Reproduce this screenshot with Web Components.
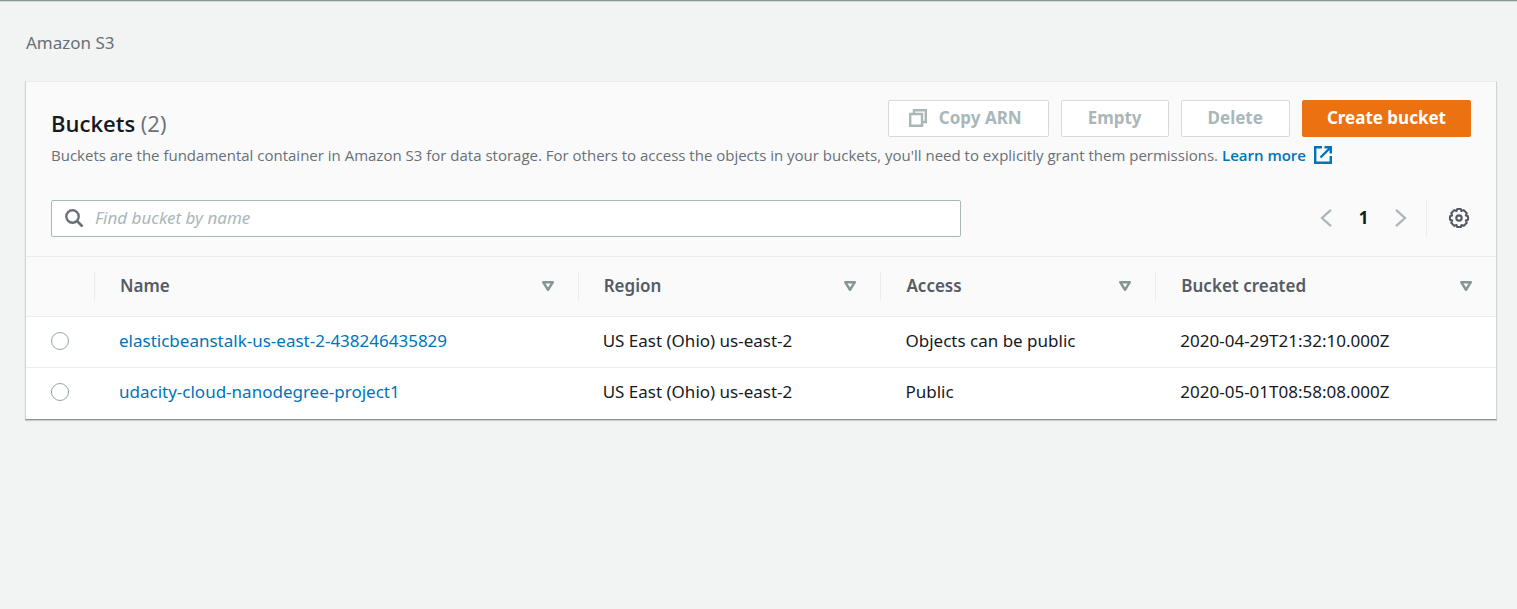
<!DOCTYPE html>
<html lang="en">
<head>
<meta charset="utf-8">
<meta name="viewport" content="width=device-width, initial-scale=1">
<title>Amazon S3</title>
<style>
  :root {
    --text: #16191f;
    --muted: #687078;
    --heading: #545b64;
    --disabled: #aab7b8;
    --line: #eaeded;
    --link: #0073bb;
    --accent: #ec7211;
  }
  body {
    margin: 0;
    background: #f2f3f3;
    color: var(--text);
    font: 17px/24px "Noto Sans", "Open Sans", sans-serif;
  }
</style>
</head>
<body>
<s3-page>
  <s3-breadcrumb slot="breadcrumb">Amazon S3</s3-breadcrumb>
  <s3-panel>
    <s3-heading slot="header" count="2">
      Buckets
      <s3-button slot="actions" icon="copy" disabled>Copy ARN</s3-button>
      <s3-button slot="actions" disabled>Empty</s3-button>
      <s3-button slot="actions" disabled>Delete</s3-button>
      <s3-button slot="actions" primary>Create bucket</s3-button>
      <span slot="description">Buckets are the fundamental container in Amazon S3 for data storage. For others to access the objects in your buckets, you'll need to explicitly grant them permissions.</span>
      <s3-external-link slot="description">Learn more</s3-external-link>
    </s3-heading>
    <s3-search slot="header" placeholder="Find bucket by name"></s3-search>
    <s3-pager slot="tools"></s3-pager>
    <s3-bucket-table></s3-bucket-table>
  </s3-panel>
</s3-page>

<script>
const icons = {
  copy: '<path d="M5 5V1.2H16.8V13H13M1.2 5H13V16.8H1.2Z" fill="none" stroke="currentColor" stroke-width="2.4"/>',
  external: '<path d="M8 1.2H1.2V16.8H16.8V10M10.5 1.2H16.8V7.5M16.5 1.5L6.5 11.5" fill="none" stroke="currentColor" stroke-width="2.4"/>',
  search: '<circle cx="7.5" cy="7.5" r="6.2" fill="none" stroke="currentColor" stroke-width="2.4"/><path d="M12 12L17.5 17.5" stroke="currentColor" stroke-width="2.7"/>',
  prev: '<path d="M14 0.8L5 9L14 17.2" fill="none" stroke="currentColor" stroke-width="2.3"/>',
  next: '<path d="M4 0.8L13 9L4 17.2" fill="none" stroke="currentColor" stroke-width="2.3"/>',
  sort: '<path d="M4.2 5.2H13.8L9 12.8Z" fill="none" stroke="currentColor" stroke-width="2.5" stroke-linejoin="round"/>',
  gear: '<path d="M7.4 0.9H10.6L11.3 2.7L13.3 1.9L16 4.7L15.2 6.7L17.1 7.4V10.6L15.2 11.3L16 13.3L13.3 16.1L11.3 15.3L10.6 17.1H7.4L6.7 15.3L4.7 16.1L2 13.3L2.8 11.3L0.9 10.6V7.4L2.8 6.7L2 4.7L4.7 1.9L6.7 2.7Z" fill="none" stroke="currentColor" stroke-width="1.9" stroke-linejoin="round"/><circle cx="9" cy="9" r="2.4" fill="none" stroke="currentColor" stroke-width="1.9"/>'
};

const define = (name, render) => customElements.define(name, class extends HTMLElement {
  connectedCallback() {
    if (this.shadowRoot) return;
    const template = document.createElement('template');
    template.innerHTML = render(this);
    this.attachShadow({ mode: 'open' }).append(template.content.cloneNode(true));
  }
});

define('s3-icon', el => `
  <style>
    :host { display: block; flex: none; width: 18px; height: 18px; }
    svg { display: block; width: 100%; height: 100%; overflow: visible; }
  </style>
  <svg viewBox="0 0 18 18" aria-hidden="true">${icons[el.getAttribute('name')]}</svg>`);

define('s3-page', () => `
  <style>
    :host { display: block; border-top: 1px solid #879596; box-shadow: inset 0 1px 0 #d5dbdb; }
    main { padding: 30px 20px 24px 25px; }
    ::slotted([slot=breadcrumb]) { margin-bottom: 26px; }
  </style>
  <main><slot name="breadcrumb"></slot><slot></slot></main>`);

define('s3-breadcrumb', () => `
  <style>
    :host { display: block; padding-left: 1px; color: var(--muted); }
    a { color: inherit; text-decoration: none; }
  </style>
  <nav aria-label="Breadcrumb"><a href="#"><slot></slot></a></nav>`);

define('s3-panel', () => `
  <style>
    :host {
      display: block; background: #fff;
      border: 1px solid #d0d5d5; border-top-color: var(--line); border-bottom-color: #879596;
      box-shadow: 0 1px 1px #c9cece;
    }
    header { background: #fafafa; padding: 18px 25px 19px; display: grid; grid-template-columns: minmax(0, 1fr) auto; row-gap: 35px; border-bottom: 1px solid var(--line); }
    ::slotted(s3-heading) { grid-column: 1 / -1; }
  </style>
  <header><slot name="header"></slot><slot name="tools"></slot></header>
  <slot></slot>`);

define('s3-heading', el => `
  <style>
    :host { display: block; }
    .row { display: flex; align-items: flex-start; justify-content: space-between; gap: 12px; }
    h2 { margin: 7px 0 0; font: 600 22px/32px "Open Sans", "Noto Sans", sans-serif; }
    .count { font-weight: 400; color: var(--muted); }
    .actions { display: flex; gap: 12px; }
    .description { margin-top: 6px; font: 15px/20px "Open Sans", "Noto Sans", sans-serif; color: var(--muted); }
  </style>
  <div class="row">
    <h2><slot></slot><span class="count">(${el.getAttribute('count')})</span></h2>
    <div class="actions"><slot name="actions"></slot></div>
  </div>
  <div class="description"><slot name="description"></slot></div>`);

define('s3-button', el => `
  <style>
    :host { display: block; }
    button {
      display: flex; align-items: center; gap: 12px; box-sizing: border-box; height: 37px;
      padding: 0 26px 2px; border: 1px solid #d5dbdb; border-radius: 2px; background: #fff;
      color: var(--disabled); font: inherit; font-weight: 700; white-space: nowrap;
    }
    .with-icon { padding-left: 20px; }
    .primary { padding: 0 24px 2px; background: var(--accent); border-color: var(--accent); color: #fff; cursor: pointer; }
  </style>
  <button type="button" class="${el.hasAttribute('primary') ? 'primary' : ''} ${el.hasAttribute('icon') ? 'with-icon' : ''}" ${el.hasAttribute('disabled') ? 'disabled' : ''}>
    ${el.hasAttribute('icon') ? `<s3-icon name="${el.getAttribute('icon')}"></s3-icon>` : ''}<span><slot></slot></span>
  </button>`);

define('s3-external-link', () => `
  <style>
    :host { display: inline-block; margin-left: 4px; vertical-align: top; }
    a { display: flex; align-items: center; gap: 8px; color: var(--link); font-weight: 600; text-decoration: none; }
  </style>
  <a href="#"><slot></slot><s3-icon name="external"></s3-icon></a>`);

define('s3-search', el => `
  <style>
    :host { display: block; max-width: 910px; }
    label {
      display: flex; align-items: center; gap: 12px; box-sizing: border-box; height: 37px;
      padding: 0 13px 1px; border: 1px solid var(--disabled); border-radius: 2px; background: #fff; color: var(--muted);
    }
    input { flex: 1; min-width: 0; padding: 0; border: 0; outline: 0; background: none; color: var(--text); font: inherit; }
    input::placeholder { color: var(--disabled); font-style: italic; opacity: 1; }
  </style>
  <label><s3-icon name="search"></s3-icon><input type="text" aria-label="${el.getAttribute('placeholder')}" placeholder="${el.getAttribute('placeholder')}"></label>`);

define('s3-pager', () => `
  <style>
    :host { display: flex; align-items: center; height: 37px; }
    button { display: flex; align-items: center; justify-content: center; box-sizing: border-box; width: 38px; height: 37px; padding: 0 0 2px; border: 0; background: none; color: var(--disabled); font: inherit; }
    .page { color: var(--text); font-weight: 700; width: 37px; }
    .settings { margin-left: 6px; padding-left: 20px; border-left: 1px solid var(--line); width: 45px; color: var(--heading); }
    .settings s3-icon { width: 20px; height: 20px; }
  </style>
  <button type="button" aria-label="Previous page" disabled><s3-icon name="prev"></s3-icon></button>
  <button type="button" class="page" aria-current="page">1</button>
  <button type="button" aria-label="Next page" disabled><s3-icon name="next"></s3-icon></button>
  <button type="button" class="settings" aria-label="Preferences"><s3-icon name="gear"></s3-icon></button>`);

const buckets = [
  ['elasticbeanstalk-us-east-2-438246435829', 'US East (Ohio) us-east-2', 'Objects can be public', '2020-04-29T21:32:10.000Z'],
  ['udacity-cloud-nanodegree-project1', 'US East (Ohio) us-east-2', 'Public', '2020-05-01T08:58:08.000Z']
];

define('s3-bucket-table', () => `
  <style>
    :host { display: block; }
    table { width: 100%; table-layout: fixed; border-collapse: separate; border-spacing: 0; }
    .pick { width: 68px; } .name { width: 32.9%; } .region { width: 20.6%; } .access { width: 18.7%; }
    th { padding: 15px 0; background: #fafafa; border-bottom: 1px solid var(--line); font-weight: 400; }
    th button {
      display: flex; align-items: center; justify-content: space-between; width: 100%; height: 29px;
      padding: 0 21px 2px 25px; border: 0; border-left: 1px solid var(--line); background: none;
      color: var(--heading); font: inherit; font-weight: 600; cursor: pointer;
    }
    th s3-icon { color: #879596; }
    td { height: 51px; padding: 0 0 2px 25px; box-sizing: border-box; border-bottom: 1px solid var(--line); white-space: nowrap; overflow: hidden; text-overflow: ellipsis; }
    tr:last-child td { border-bottom-color: #fff; }
    a { color: var(--link); text-decoration: none; }
    input { appearance: none; display: block; box-sizing: border-box; width: 18px; height: 18px; margin: 0; border: 1px solid #95a5a6; border-radius: 50%; background: #fff; }
    input:checked { border: 5px solid var(--link); }
  </style>
  <table>
    <colgroup><col class="pick"><col class="name"><col class="region"><col class="access"><col></colgroup>
    <thead><tr><th aria-label="Selection"></th>${['Name', 'Region', 'Access', 'Bucket created'].map(h =>
      `<th scope="col"><button type="button"><span>${h}</span><s3-icon name="sort"></s3-icon></button></th>`).join('')}</tr></thead>
    <tbody>${buckets.map(([name, region, access, created]) =>
      `<tr><td><input type="radio" name="bucket" aria-label="${name}"></td><td><a href="#">${name}</a></td><td>${region}</td><td>${access}</td><td>${created}</td></tr>`).join('')}</tbody>
  </table>`);
</script>
</body>
</html>
